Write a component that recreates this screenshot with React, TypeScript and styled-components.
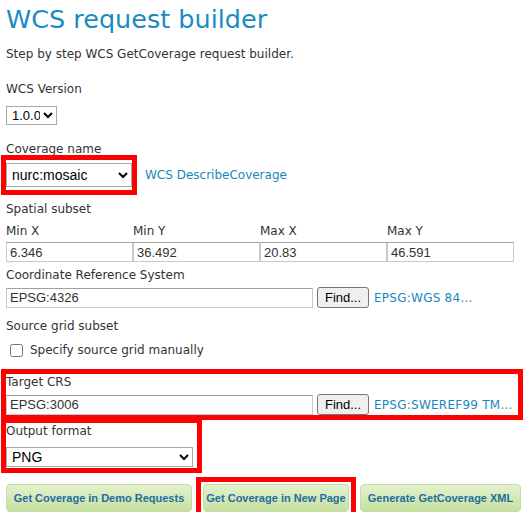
import React from 'react';
import styled, { createGlobalStyle } from 'styled-components';

const GlobalStyle = createGlobalStyle`
  body {
    margin: 0;
    background: #ffffff;
    font-family: 'DejaVu Sans', Verdana, sans-serif;
    font-size: 12px;
    color: #333333;
  }
`;

const bounds = [
  { label: 'Min X', value: '6.346' },
  { label: 'Min Y', value: '36.492' },
  { label: 'Max X', value: '20.83' },
  { label: 'Max Y', value: '46.591' },
];

const App: React.FC = () => {
  return (
    <>
      <GlobalStyle />
      <Page>
        <Title>WCS request builder</Title>
        <Intro>Step by step WCS GetCoverage request builder.</Intro>

        <Label $top={19}>WCS Version</Label>
        <Select $width={51} $height={19} $top={9} defaultValue="1.0.0">
          <option>1.0.0</option>
          <option>1.1.1</option>
          <option>2.0.1</option>
        </Select>

        <Label $top={16}>Coverage name</Label>
        <Row $top={3}>
          <Highlight>
            <Select $width={126} $height={24} $size={14} defaultValue="nurc:mosaic">
              <option>nurc:mosaic</option>
            </Select>
          </Highlight>
          <Link href="#" $left={13}>WCS DescribeCoverage</Link>
        </Row>

        <Label $top={11}>Spatial subset</Label>
        <BoundsGrid>
          {bounds.map((b) => (
            <BoundCell key={b.label}>
              <Label>{b.label}</Label>
              <Input $width={127} defaultValue={b.value} />
            </BoundCell>
          ))}
        </BoundsGrid>

        <Label $top={5}>Coordinate Reference System</Label>
        <CrsRow>
          <Input $width={307} defaultValue="EPSG:4326" />
          <FindButton>Find...</FindButton>
          <Link href="#" $left={5} $spaced>EPSG:WGS 84...</Link>
        </CrsRow>

        <Label $top={10}>Source grid subset</Label>
        <CheckRow>
          <input type="checkbox" />
          <span>Specify source grid manually</span>
        </CheckRow>

        <TargetBox>
          <Label>Target CRS</Label>
          <CrsRow>
            <Input $width={307} defaultValue="EPSG:3006" />
            <FindButton>Find...</FindButton>
            <Link href="#" $left={5} $spaced>EPSG:SWEREF99 TM...</Link>
          </CrsRow>
        </TargetBox>

        <OutputBox>
          <Label>Output format</Label>
          <Select $width={187} $height={20} $size={14} $top={8} defaultValue="PNG">
            <option>PNG</option>
            <option>GeoTIFF</option>
            <option>ArcGrid</option>
          </Select>
        </OutputBox>

        <Actions>
          <ActionButton $width={186}>Get Coverage in Demo Requests</ActionButton>
          <ActionHighlight>
            <ActionButton $width={146}>Get Coverage in New Page</ActionButton>
          </ActionHighlight>
          <ActionButton $width={161}>Generate GetCoverage XML</ActionButton>
        </Actions>
      </Page>
    </>
  );
};

const Page = styled.div`
  display: flex;
  flex-direction: column;
  align-items: flex-start;
  padding: 3px 6px 0 6px;
`;

const Title = styled.h1`
  margin: 0;
  font-size: 25.5px;
  font-weight: normal;
  line-height: 32px;
  color: #1a8bc2;
`;

const Intro = styled.p`
  margin: 11px 0 0 0;
  line-height: 16px;
`;

const Label = styled.div<{ $top?: number }>`
  margin-top: ${(p) => p.$top ?? 0}px;
  line-height: 16px;
  color: #333333;
`;

const Select = styled.select<{ $width: number; $height: number; $size?: number; $top?: number }>`
  margin: ${(p) => p.$top ?? 0}px 0 0 0;
  width: ${(p) => p.$width}px;
  height: ${(p) => p.$height}px;
  font-family: 'Liberation Sans', Arial, sans-serif;
  font-size: ${(p) => p.$size ?? 13}px;
  color: #000000;
  background: #ffffff;
  border: 1px solid #a9a9a9;
  border-radius: 0;
  padding: 0 0 0 1px;
`;

const Row = styled.div<{ $top?: number }>`
  display: flex;
  align-items: center;
  margin-top: ${(p) => p.$top ?? 0}px;
`;

const Highlight = styled.div`
  display: flex;
  padding: 3px 0;
  outline: 5px solid #ff0000;
  outline-offset: 0;
`;

const Link = styled.a<{ $left?: number; $spaced?: boolean }>`
  margin-left: ${(p) => p.$left ?? 0}px;
  color: #1a88bb;
  text-decoration: none;
  font-size: 12px;
  letter-spacing: ${(p) => (p.$spaced ? '0.25px' : 'normal')};
  white-space: nowrap;
`;

const BoundsGrid = styled.div`
  display: grid;
  grid-template-columns: repeat(4, 127px);
  margin-top: 6px;
`;

const BoundCell = styled.div`
  display: flex;
  flex-direction: column;
  gap: 3px;
`;

const Input = styled.input<{ $width: number }>`
  box-sizing: border-box;
  width: ${(p) => p.$width}px;
  height: 20px;
  margin: 0;
  padding: 0 3px;
  font-family: 'Liberation Sans', Arial, sans-serif;
  font-size: 13px;
  color: #333333;
  border: 1px solid #c9c9c9;
  border-top-color: #a0a0a0;
  background: #ffffff;
`;

const CrsRow = styled.div`
  display: flex;
  align-items: center;
  margin-top: 4px;
`;

const FindButton = styled.button`
  margin-left: 4px;
  height: 21px;
  width: 52px;
  padding: 0;
  font-family: 'Liberation Sans', Arial, sans-serif;
  font-size: 13px;
  color: #000000;
  background: #efefef;
  border: 1px solid #767676;
  border-radius: 3px;
`;

const CheckRow = styled.label`
  display: flex;
  align-items: center;
  margin-top: 8px;
  line-height: 16px;
  input {
    margin: 0 7px 0 4px;
    width: 13px;
    height: 13px;
  }
`;

const TargetBox = styled.div`
  margin-top: 16px;
  width: 512px;
  outline: 5px solid #ff0000;
  outline-offset: 0;
`;

const OutputBox = styled.div`
  display: flex;
  flex-direction: column;
  margin-top: 8px;
  width: 191px;
  padding-bottom: 1px;
  outline: 5px solid #ff0000;
`;

const Actions = styled.div`
  display: flex;
  align-items: center;
  gap: 11px;
  margin-top: 16px;
`;

const ActionHighlight = styled.div`
  display: flex;
  outline: 5px solid #ff0000;
  outline-offset: 2px;
`;

const ActionButton = styled.button<{ $width: number }>`
  width: ${(p) => p.$width}px;
  height: 28px;
  padding: 0;
  font-family: 'Liberation Sans', Arial, sans-serif;
  font-size: 11px;
  font-weight: bold;
  color: #1f6e9c;
  background: linear-gradient(#e4f1cf, #c6e09f);
  border: 1px solid #c6dba6;
  border-radius: 4px;
  white-space: nowrap;
`;

export default App;
